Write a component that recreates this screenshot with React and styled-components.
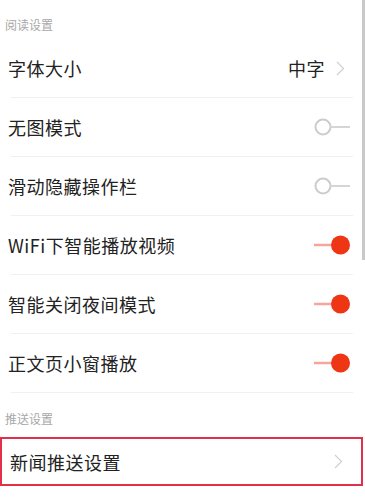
import React from "react";
import styled, { createGlobalStyle } from "styled-components";

const GlobalStyle = createGlobalStyle`
  body {
    margin: 0;
    background: #ffffff;
    font-family: "Noto Sans CJK SC", "Noto Sans", sans-serif;
    color: #222222;
  }
`;

const Page = styled.div`
  width: 365px;
  height: 504px;
  overflow: hidden;
  background: #fff;
`;

const Scrollbar = styled.div`
  position: fixed;
  top: 0;
  right: 0;
  width: 3px;
  height: 260px;
  background: #c9c9c9;
`;

const SectionHeader = styled.div`
  padding: ${(p) => p.$pad};
  font-size: 12px;
  line-height: 14px;
  color: #a8a8a8;
`;

const Row = styled.div`
  display: flex;
  align-items: center;
  justify-content: space-between;
  height: ${(p) => p.$height || 58}px;
  padding: 0 ${(p) => (p.$highlight ? 12 : 14)}px 0 8px;
  box-sizing: border-box;
  border: ${(p) => (p.$highlight ? "2px solid #e3304a" : "none")};
  margin-right: ${(p) => (p.$highlight ? "2px" : "0")};
`;

const Label = styled.span`
  font-size: 18px;
  letter-spacing: 0.5px;
  color: #222;
`;

const Right = styled.div`
  display: flex;
  align-items: center;
  gap: 11px;
`;

const Value = styled.span`
  font-size: 18px;
  letter-spacing: 0.5px;
  color: #222;
`;

const Divider = styled.div`
  height: 1px;
  margin: 0 12px 0 11px;
  background: #f0f0f0;
`;

const ChevronWrap = styled.span`
  display: flex;
  margin-right: 6px;
`;

const Chevron = () => (
  <ChevronWrap>
    <svg width="9" height="15" viewBox="0 0 9 15">
      <path d="M1 1 L7.5 7.5 L1 14" fill="none" stroke="#cfcfcf" strokeWidth="1.2" />
    </svg>
  </ChevronWrap>
);

const Toggle = ({ on }) =>
  on ? (
    <svg width="37" height="20" viewBox="0 0 37 20">
      <line x1="0" y1="10" x2="18" y2="10" stroke="#f4a59c" strokeWidth="2.5" />
      <circle cx="26.5" cy="10" r="9.5" fill="#ee3514" />
    </svg>
  ) : (
    <svg width="37" height="20" viewBox="0 0 37 20">
      <circle cx="9" cy="10" r="7.5" fill="none" stroke="#cccccc" strokeWidth="2" />
      <line x1="16.5" y1="10" x2="36" y2="10" stroke="#d5d5d5" strokeWidth="2" />
    </svg>
  );

const reading = [
  { label: "无图模式", on: false },
  { label: "滑动隐藏操作栏", on: false },
  { label: "WiFi下智能播放视频", on: true },
  { label: "智能关闭夜间模式", on: true },
  { label: "正文页小窗播放", on: true },
];

export default function App() {
  return (
    <Page>
      <GlobalStyle />
      <SectionHeader $pad="18px 5px 7px">阅读设置</SectionHeader>
      <Row>
        <Label>字体大小</Label>
        <Right>
          <Value>中字</Value>
          <Chevron />
        </Right>
      </Row>
      <Divider />
      {reading.map((r) => (
        <React.Fragment key={r.label}>
          <Row>
            <Label>{r.label}</Label>
            <Toggle on={r.on} />
          </Row>
          <Divider />
        </React.Fragment>
      ))}
      <SectionHeader $pad="19px 5px 11px">推送设置</SectionHeader>
      <Row $highlight $height={49}>
        <Label>新闻推送设置</Label>
        <Chevron />
      </Row>
      <Scrollbar />
    </Page>
  );
}
